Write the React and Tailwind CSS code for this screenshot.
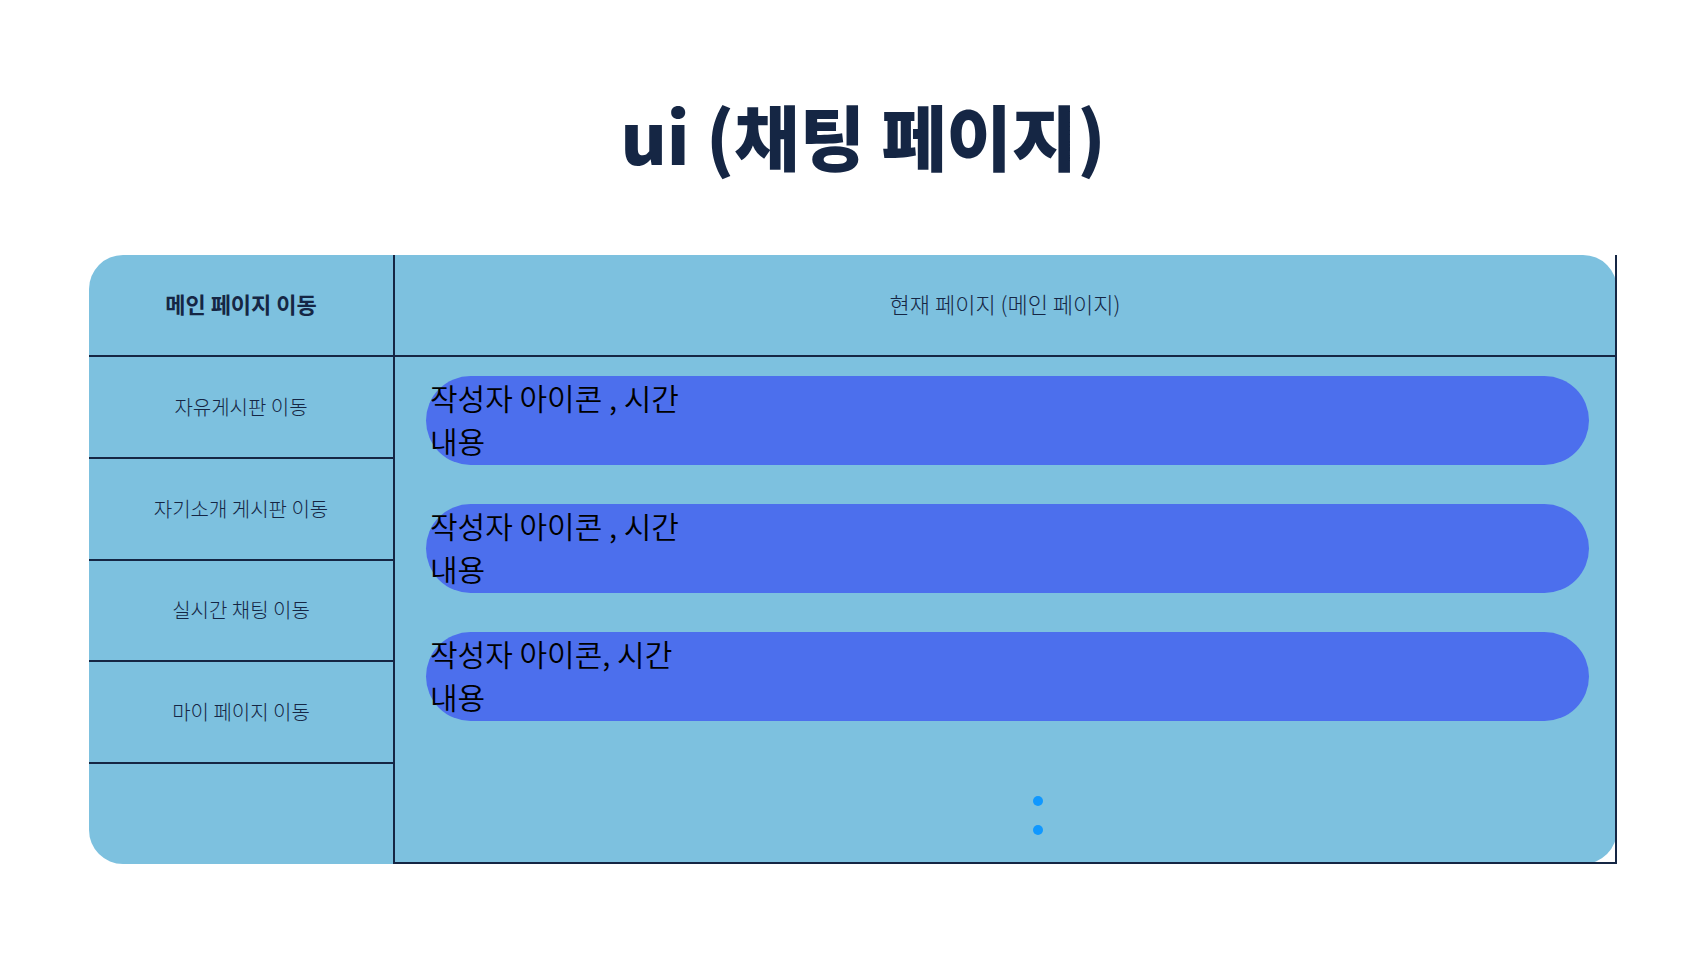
const links = ["자유게시판 이동", "자기소개 게시판 이동", "실시간 채팅 이동", "마이 페이지 이동"];

const messages = [
  { id: 1, meta: "작성자 아이콘 , 시간", body: "내용" },
  { id: 2, meta: "작성자 아이콘 , 시간", body: "내용" },
  { id: 3, meta: "작성자 아이콘, 시간", body: "내용" },
];

function Sidebar() {
  return (
    <nav className="flex flex-col">
      <a
        href="#main"
        className="flex h-[102px] shrink-0 items-center justify-center border-b-2 border-[#152644] pb-1 text-[22px] leading-8 font-bold"
      >
        메인 페이지 이동
      </a>
      {links.map((label) => (
        <a
          key={label}
          href={`#${label}`}
          className="flex flex-1 items-center justify-center border-b-2 border-[#152644] text-[20px] leading-8 font-light"
        >
          {label}
        </a>
      ))}
      <div className="flex-1" />
    </nav>
  );
}

function Message({ meta, body }) {
  return (
    <li className="rounded-full bg-[#4c6fed] pb-[3px] pl-1 text-[30px] leading-[43px] font-[350] text-black">
      <p>{meta}</p>
      <p>{body}</p>
    </li>
  );
}

export default function App() {
  return (
    <div className="min-h-screen bg-white pt-[82px] pr-[88px] pb-20 pl-[89px] font-['Noto_Sans_CJK_KR',sans-serif] text-[#152644]">
      <h1 className="pl-5 text-center text-[71px] leading-[104px] font-black">ui (채팅 페이지)</h1>

      <div className="mt-[69px] grid grid-cols-[304px_1fr] rounded-[34px] bg-[#7dc1df]">
        <Sidebar />
        <main className="border-x-2 border-b-2 border-[#152644]">
          <h2 className="flex h-[102px] items-center justify-center border-b-2 border-[#152644] pb-1 text-[22px] leading-8 font-light">
            현재 페이지 (메인 페이지)
          </h2>
          <ul className="flex flex-col gap-[39px] pt-[19px] pr-[26px] pl-[31px]">
            {messages.map((m) => (
              <Message key={m.id} meta={m.meta} body={m.body} />
            ))}
          </ul>
          <div className="flex flex-col items-center gap-[19px] pt-[75px] pb-[27px] pl-[66px]">
            <span className="size-[10px] rounded-full bg-[#1098ff]" />
            <span className="size-[10px] rounded-full bg-[#1098ff]" />
          </div>
        </main>
      </div>
    </div>
  );
}
